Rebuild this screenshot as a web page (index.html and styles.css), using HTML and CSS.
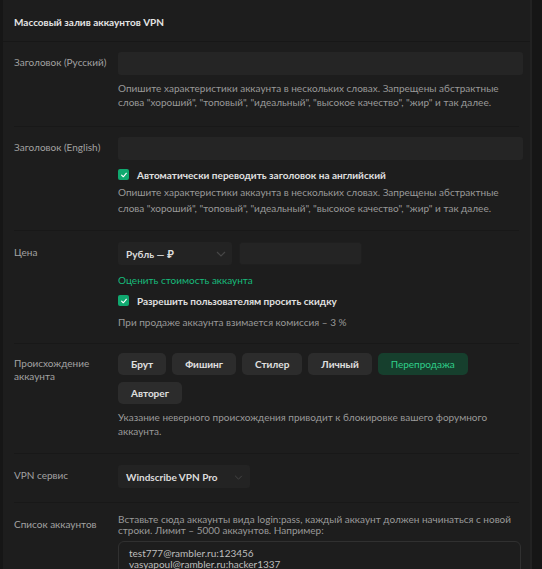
FILE: index.html
```html
<!DOCTYPE html>
<html lang="ru">
<head>
<meta charset="utf-8">
<link rel="stylesheet" href="styles.css">
</head>
<body>
<div class="panel">
  <div class="head">Массовый залив аккаунтов VPN</div>
  <div class="body">
    <div class="row r1">
      <div class="label">Заголовок (Русский)</div>
      <div class="field">
        <div class="input wide"></div>
        <div class="hint">Опишите характеристики аккаунта в нескольких словах. Запрещены абстрактные слова "хороший", "топовый", "идеальный", "высокое качество", "жир" и так далее.</div>
      </div>
    </div>
    <div class="row r2">
      <div class="label">Заголовок (English)</div>
      <div class="field">
        <div class="input wide"></div>
        <div class="check"><span class="box"><svg viewBox="0 0 10 10" width="8" height="8"><path d="M2 5.2 L4.1 7.2 L8 2.8" fill="none" stroke="#fff" stroke-width="1.4" stroke-linecap="round" stroke-linejoin="round"/></svg></span><span class="check-text">Автоматически переводить заголовок на английский</span></div>
        <div class="hint">Опишите характеристики аккаунта в нескольких словах. Запрещены абстрактные слова "хороший", "топовый", "идеальный", "высокое качество", "жир" и так далее.</div>
      </div>
    </div>
    <div class="row r3">
      <div class="label">Цена</div>
      <div class="field">
        <div class="price">
          <div class="select cur">Рубль — ₽<svg class="chev" viewBox="0 0 10 6" width="10" height="6"><path d="M1 1 L5 5 L9 1" fill="none" stroke="#474747" stroke-width="1.1"/></svg></div>
          <div class="input amount"></div>
        </div>
        <div class="link">Оценить стоимость аккаунта</div>
        <div class="check"><span class="box"><svg viewBox="0 0 10 10" width="8" height="8"><path d="M2 5.2 L4.1 7.2 L8 2.8" fill="none" stroke="#fff" stroke-width="1.4" stroke-linecap="round" stroke-linejoin="round"/></svg></span><span class="check-text">Разрешить пользователям просить скидку</span></div>
        <div class="hint fee">При продаже аккаунта взимается комиссия – 3 %</div>
      </div>
    </div>
    <div class="row r4">
      <div class="label">Происхождение аккаунта</div>
      <div class="field">
        <div class="btns">
          <span class="btn">Брут</span>
          <span class="btn">Фишинг</span>
          <span class="btn">Стилер</span>
          <span class="btn">Личный</span>
          <span class="btn active">Перепродажа</span>
          <span class="btn">Авторег</span>
        </div>
        <div class="hint">Указание неверного происхождения приводит к блокировке вашего форумного аккаунта.</div>
      </div>
    </div>
    <div class="row r5">
      <div class="label">VPN сервис</div>
      <div class="field">
        <div class="select vpn">Windscribe VPN Pro<svg class="chev" viewBox="0 0 10 6" width="9" height="5"><path d="M1 1 L5 5 L9 1" fill="none" stroke="#474747" stroke-width="1.1"/></svg></div>
      </div>
    </div>
    <div class="row last">
      <div class="label">Список аккаунтов</div>
      <div class="field">
        <div class="hint dense">Вставьте сюда аккаунты вида login:pass, каждый аккаунт должен начинаться с новой строки. Лимит – 5000 аккаунтов. Например:</div>
        <div class="textarea">test777@rambler.ru:123456<br>vasyapoul@rambler.ru:hacker1337</div>
      </div>
    </div>
  </div>
</div>
</body>
</html>
```

FILE: styles.css
```css
html, body {
  margin: 0;
  padding: 0;
  background: #161616;
  height: 100%;
  overflow: hidden;
}
body {
  font-family: Lato, Roboto, sans-serif;
  font-size: 10px;
  color: #d6d6d6;
}
.panel {
  margin-left: 3px;
  width: 527px;
  background: #1d1d1d;
  min-height: 100%;
  border-right: 2px solid #222;
}
.head {
  height: 42px;
  box-sizing: border-box;
  padding: 16px 11px 0;
  font-weight: 700;
  line-height: 12px;
  color: #e4e4e4;
  border-bottom: 1px solid #171717;
}
.body {
  padding: 0 11px;
}
.row {
  display: flex;
  border-bottom: 1px solid #181818;
  box-sizing: border-box;
}
.r1 { height: 85px; padding-top: 10px; }
.r2 { height: 104px; padding-top: 10px; }
.r3 { height: 113px; padding-top: 11px; }
.r4 { height: 110px; padding-top: 9px; }
.r5 { height: 49px; padding-top: 11px; }
.row.last { border-bottom: none; padding-top: 11px; }
.label {
  width: 104px;
  flex: none;
  box-sizing: border-box;
  color: #a2a2a2;
  padding-top: 4px;
  padding-right: 10px;
  line-height: 13px;
}
.field {
  flex: 1;
  min-width: 0;
}
.input {
  height: 23px;
  background: #252525;
  border-radius: 3px;
}
.input.wide { width: 405px; }
.hint {
  color: #999;
  line-height: 14px;
  margin-top: 6px;
  width: 392px;
}
.r2 .hint { line-height: 16px; margin-top: 3px; }
.check {
  display: flex;
  align-items: center;
  margin-top: 8px;
  height: 13px;
}
.box {
  width: 11px;
  height: 11px;
  border-radius: 2px;
  background: #10a86f;
  display: flex;
  align-items: center;
  justify-content: center;
  margin-right: 8px;
}
.check-text {
  font-weight: 700;
  color: #e0e0e0;
}
.price {
  display: flex;
  gap: 7px;
}
.select {
  height: 23px;
  background: #232323;
  border-radius: 3px;
  display: flex;
  align-items: center;
  padding: 0 6px 0 8px;
  font-weight: 700;
  color: #dcdcdc;
  box-sizing: border-box;
  justify-content: space-between;
}
.select.cur { width: 114px; }
.select.vpn { width: 132px; padding-right: 7px; }
.chev { margin-top: 1px; }
.input.amount {
  width: 123px;
  height: 23px;
  box-sizing: border-box;
  border: 1px solid #1f1f1f;
  background: #242424;
}
.link {
  color: #17bb7b;
  margin-top: 8px;
  line-height: 14px;
}
.r3 .check { margin-top: 7px; }
.hint.fee { margin-top: 8px; }
.btns {
  display: flex;
  flex-wrap: wrap;
  gap: 7px 6px;
  width: 360px;
}
.btn {
  height: 22px;
  box-sizing: border-box;
  padding: 0 13px;
  display: inline-flex;
  align-items: center;
  background: #2c2c2c;
  border-radius: 5px;
  font-weight: 700;
  color: #e0e0e0;
}
.btn.active {
  background: #163f2d;
  color: #2fcf8a;
  font-weight: 400;
  padding: 0 13px;
}
.r4 .hint { margin-top: 6px; }
.last .label { padding-top: 4px; }
.hint.dense { line-height: 11px; margin-top: 0; width: 402px; }
.textarea {
  margin-top: 5px;
  width: 403px;
  box-sizing: border-box;
  border: 1px solid #303030;
  border-radius: 6px;
  padding: 6px 10px;
  line-height: 11px;
  color: #bdbdbd;
  height: 60px;
}
```
